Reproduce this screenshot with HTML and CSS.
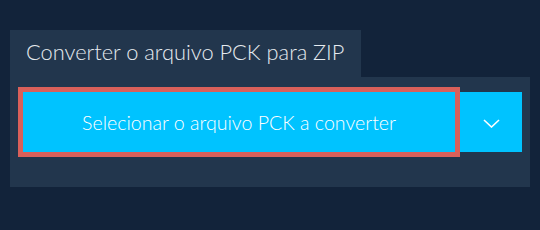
FILE: index.html
```html
<!DOCTYPE html>
<html lang="pt">
<head>
    <meta charset="UTF-8">
    <meta name="viewport" content="width=device-width, initial-scale=1.0">
    <title>Converter PCK para ZIP</title>
    <link rel="stylesheet" href="styles.css">
</head>
<body>

<div class="converter">
    <div class="tab">Converter o arquivo PCK para ZIP</div>
    <div class="panel">
        <button class="select-button">Selecionar o arquivo PCK a converter</button>
        <button class="menu-button" aria-label="Mais opções">
            <svg width="17" height="9" viewBox="0 0 17 9">
                <path d="M1 1 L8.5 8 L16 1" fill="none" stroke="#fff" stroke-width="1.6"/>
            </svg>
        </button>
    </div>
</div>

</body>
</html>
```

FILE: styles.css
```css
body {
    margin: 0;
    padding: 0;
    background-color: #12233a;
    font-family: Lato, "Open Sans", sans-serif;
}
.converter {
    padding: 30px 10px 0 10px;
}
.tab {
    display: inline-block;
    box-sizing: border-box;
    width: 351px;
    height: 47px;
    padding: 8px 0 0 16px;
    background-color: #22364d;
    color: #e6ebf0;
    font-size: 21.8px;
    font-weight: 300;
}
.panel {
    display: flex;
    background-color: #22364d;
    padding: 15px 8px 35px 13px;
}
button {
    border: none;
    margin: 0;
    padding: 0;
    height: 60px;
    background-color: #00c3ff;
    color: white;
    font-family: Lato, "Open Sans", sans-serif;
    font-size: 19.6px;
    font-weight: 300;
    cursor: pointer;
}
.select-button {
    width: 432px;
    margin-right: 5px;
    outline: 5px solid #d9605a;
}
.menu-button {
    flex: 1;
    display: flex;
    align-items: center;
    justify-content: center;
}
.menu-button svg {
    display: block;
    margin-top: 3px;
}
```
